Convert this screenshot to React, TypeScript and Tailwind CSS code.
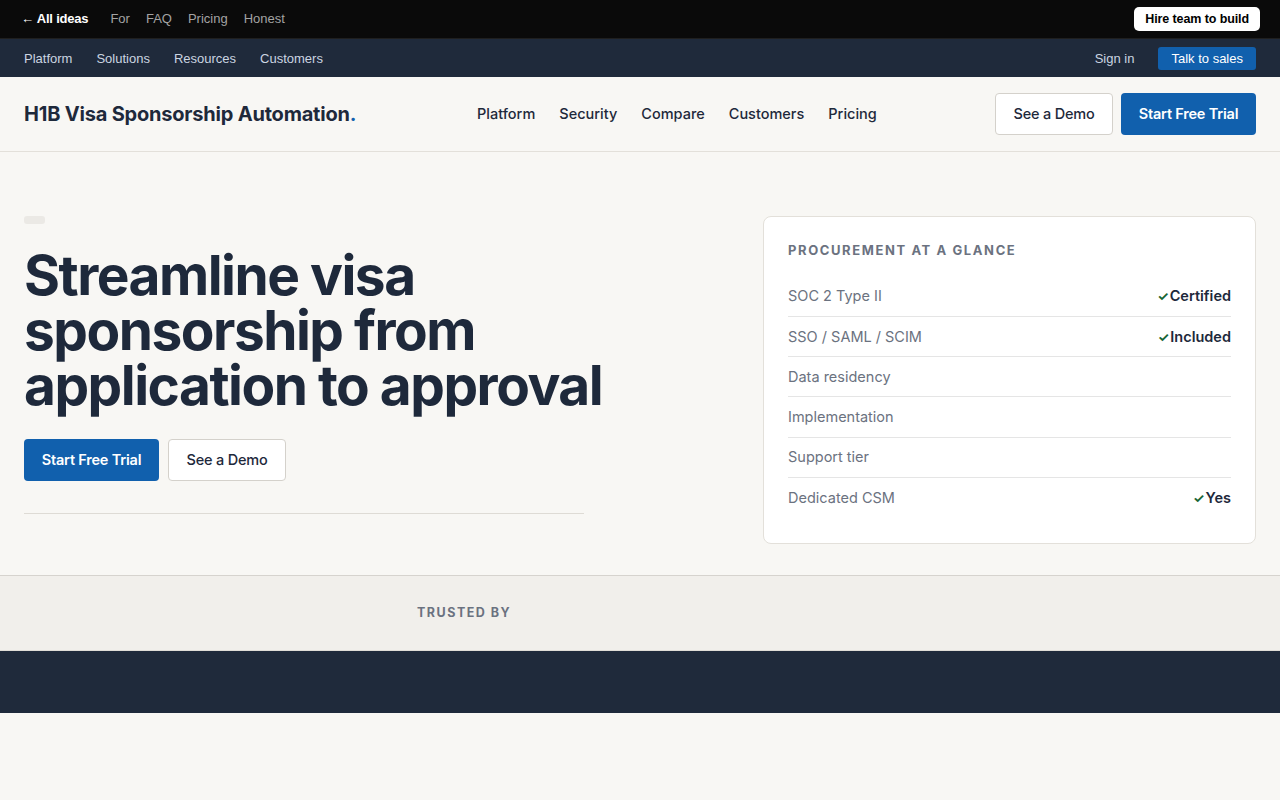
const topLinks = ["For", "FAQ", "Pricing", "Honest"];
const subLinks = ["Platform", "Solutions", "Resources", "Customers"];
const mainLinks = ["Platform", "Security", "Compare", "Customers", "Pricing"];

const glance = [
  { label: "SOC 2 Type II", value: "Certified" },
  { label: "SSO / SAML / SCIM", value: "Included" },
  { label: "Data residency", value: "" },
  { label: "Implementation", value: "" },
  { label: "Support tier", value: "" },
  { label: "Dedicated CSM", value: "Yes" },
];

const App = () => {
  return (
    <div className="min-h-screen bg-[#f8f7f4] font-['Inter',sans-serif] text-[#1e293b]">
      {/* Ideas bar */}
      <div className="h-[39px] bg-[#0a0a0a] border-b border-[#1f1f1f] flex items-center justify-between pl-[21px] pr-5 font-['Liberation_Sans',Arial,sans-serif] text-[13px]">
        <div className="flex items-center">
          <span className="text-white font-bold mr-[22px] tracking-[-0.2px]">← All ideas</span>
          <div className="flex items-center gap-4 text-[#a3a3a3]">
            {topLinks.map((l) => (
              <span key={l}>{l}</span>
            ))}
          </div>
        </div>
        <button className="bg-white text-black font-bold rounded-[5px] h-6 px-[11px] text-[12.5px] tracking-[-0.1px]">
          Hire team to build
        </button>
      </div>

      {/* Utility nav */}
      <div className="h-[38px] bg-[#1f2a3b] flex items-center justify-between px-6 pt-px font-['Liberation_Sans',Arial,sans-serif] text-[13px] text-[#cbd5e1]">
        <div className="flex items-center gap-6">
          {subLinks.map((l) => (
            <span key={l}>{l}</span>
          ))}
        </div>
        <div className="flex items-center gap-6">
          <span>Sign in</span>
          <button className="bg-[#1160ad] text-white rounded-[3px] h-[23px] px-[13px] text-[13px]">
            Talk to sales
          </button>
        </div>
      </div>

      {/* Site header */}
      <header className="h-[75px] border-b border-[#e3e0da] flex items-center px-6">
        <div className="text-[20px] font-bold tracking-[-0.2px] w-[453px]">
          H1B Visa Sponsorship Automation<span className="text-[#1160ad]">.</span>
        </div>
        <nav className="flex items-center gap-6 text-[14.5px] font-medium">
          {mainLinks.map((l) => (
            <span key={l}>{l}</span>
          ))}
        </nav>
        <div className="ml-auto flex items-center gap-2">
          <button className="h-[42px] w-[118px] rounded-[4px] border border-[#d4d1cb] bg-white text-[14.5px] font-medium tracking-[-0.2px]">
            See a Demo
          </button>
          <button className="h-[42px] w-[135px] rounded-[4px] bg-[#1160ad] text-white text-[14.5px] font-semibold tracking-[-0.2px]">
            Start Free Trial
          </button>
        </div>
      </header>

      {/* Hero */}
      <section className="flex items-start justify-between px-6 pt-16 pb-[31px]">
        <div className="w-[560px]">
          <div className="w-[21px] h-2 rounded-[3px] bg-[#ebe9e5]" />
          <h1 className="mt-6 w-[620px] text-[55px] leading-[55px] font-bold tracking-[-1.5px]">
            Streamline visa sponsorship from application to approval
          </h1>
          <div className="mt-[26px] flex items-center gap-[9px]">
            <button className="h-[42px] w-[135px] rounded-[4px] bg-[#1160ad] text-white text-[14.5px] font-semibold tracking-[-0.2px]">
              Start Free Trial
            </button>
            <button className="h-[42px] w-[118px] rounded-[4px] border border-[#d4d1cb] bg-white text-[14.5px] font-medium tracking-[-0.2px]">
              See a Demo
            </button>
          </div>
          <div className="mt-8 border-t border-[#dedbd5]" />
        </div>

        <div className="w-[493px] bg-white border border-[#e3e0da] rounded-lg px-6 pt-6 pb-[25px]">
          <div className="text-[13px] font-bold tracking-[1.6px] text-[#6b7280] uppercase">
            Procurement at a glance
          </div>
          <div className="mt-4">
            {glance.map((row, i) => (
              <div
                key={row.label}
                className={`flex items-center justify-between h-[40.25px] text-[14.5px] ${
                  i < glance.length - 1 ? "border-b border-[#e5e5e5]" : ""
                }`}
              >
                <span className="text-[#6b7280]">{row.label}</span>
                {row.value && (
                  <span className="font-semibold text-[#1e293b]">
                    <span className="text-[#166534] text-[13px] font-bold mr-px">✓</span>
                    {row.value}
                  </span>
                )}
              </div>
            ))}
          </div>
        </div>
      </section>

      {/* Logos strip */}
      <section className="h-[76px] bg-[#f1efeb] border-t border-[#d6d3ce] border-b border-b-[#e0ddd7] flex items-center pl-[417px]">
        <span className="text-[12.5px] font-bold tracking-[1.5px] text-[#6b7280]">TRUSTED BY</span>
      </section>

      {/* Dark band */}
      <section className="h-[62px] bg-[#1f2a3b]" />
    </div>
  );
};

export default App;
